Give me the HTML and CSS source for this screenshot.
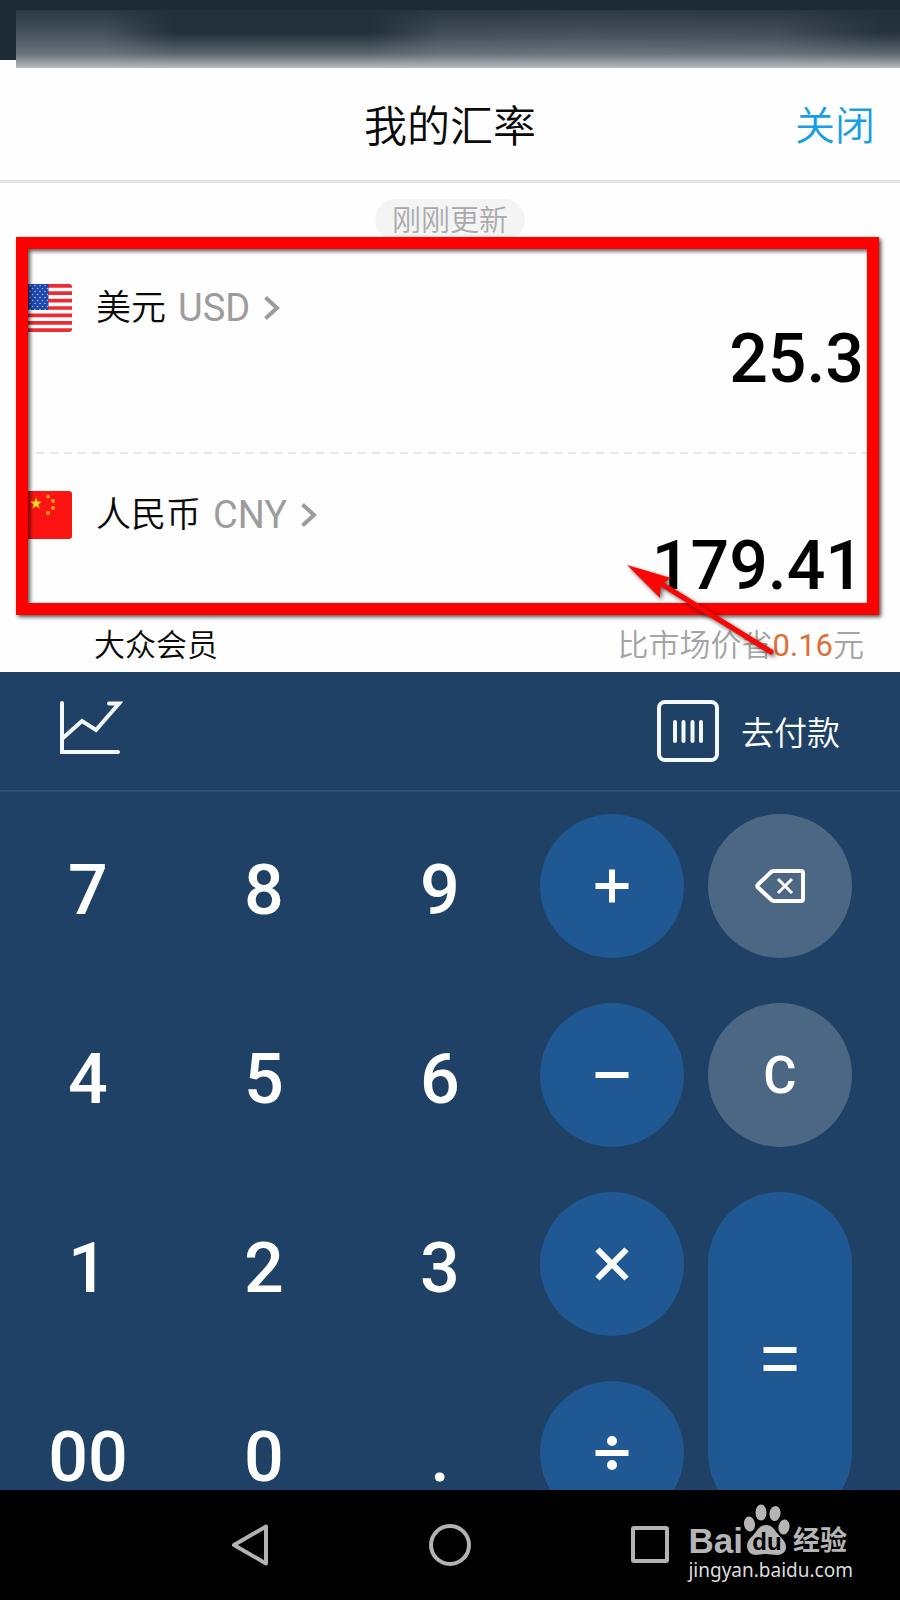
FILE: index.html
```html
<!DOCTYPE html>
<html lang="zh-CN">
<head>
<meta charset="utf-8">
<meta name="viewport" content="width=device-width, initial-scale=1">
<title>我的汇率</title>
<link rel="stylesheet" href="styles.css">
</head>
<body>
<div class="app">
  <div class="status"><div class="status-blur"></div></div>

  <header class="header">
    <h1 class="title">我的汇率</h1>
    <button class="close" type="button">关闭</button>
  </header>

  <main class="rates">
    <div class="updated">刚刚更新</div>

    <section class="rate">
      <button class="currency" type="button">
        <svg class="flag" viewBox="0 0 48 48" aria-hidden="true">
          <defs>
            <clipPath id="round"><rect width="48" height="48" rx="3"/></clipPath>
            <pattern id="stars" width="5" height="6" patternUnits="userSpaceOnUse">
              <circle cx="1" cy="1.5" r=".8" fill="#a9c0f0"/><circle cx="3.5" cy="4.5" r=".8" fill="#a9c0f0"/>
            </pattern>
          </defs>
          <g clip-path="url(#round)">
            <rect width="48" height="48" fill="#fff"/>
            <path d="M0 1.8h48M0 9.2h48M0 16.6h48M0 24h48M0 31.4h48M0 38.8h48M0 46.2h48" stroke="#ee2b35" stroke-width="3.7"/>
            <rect width="24.500" height="26" fill="#1d47ab"/>
            <rect width="24.500" height="26" fill="url(#stars)"/>
          </g>
        </svg>
        <span class="name">美元</span>
        <span class="code">USD</span>
        <svg class="chevron" viewBox="0 0 16 24" aria-hidden="true"><path d="M1.500 1.500 13 12 1.500 22.500"/></svg>
      </button>
      <output class="amount">25.3</output>
    </section>

    <svg class="divider" aria-hidden="true"><line x1="0" y1="1" x2="100%" y2="1"/></svg>

    <section class="rate">
      <button class="currency" type="button">
        <svg class="flag" viewBox="0 0 48 48" aria-hidden="true">
          <rect width="48" height="48" rx="3" fill="#fd1412"/>
          <g fill="#ffdc13">
            <path d="m12 6 1.500 4.400 4.600.1-3.700 2.800 1.300 4.500-3.700-2.700-3.700 2.700 1.300-4.500-3.700-2.800 4.600-.1z"/>
            <g fill="#fba21a"><circle cx="24" cy="5.500" r="2"/><circle cx="29" cy="10" r="2"/><circle cx="29" cy="17" r="2"/><circle cx="24" cy="22" r="2"/></g>
          </g>
        </svg>
        <span class="name">人民币</span>
        <span class="code">CNY</span>
        <svg class="chevron" viewBox="0 0 16 24" aria-hidden="true"><path d="M1.500 1.500 13 12 1.500 22.500"/></svg>
      </button>
      <output class="amount">179.41</output>
    </section>

    <div class="member">
      <span>大众会员</span>
      <span class="saving">比市场价省<b class="saved">0.16</b>元</span>
    </div>

    <div class="mark-box"></div>
    <svg class="mark-arrow" viewBox="0 0 154 96" aria-hidden="true">
      <path d="M3 2 47 15 40 19.500 149 87q2 3-2 5L36.500 23.500 36 35z"/>
    </svg>
  </main>

  <div class="toolbar">
    <button class="tool" type="button" aria-label="走势">
      <svg class="chart" viewBox="1 1 64 62" aria-hidden="true"><path d="M4 4v49h56M5 39 24 22l14 9L61 4.500H51"/></svg>
    </button>
    <button class="tool" type="button">
      <svg class="barcode" viewBox="0 0 62 62" aria-hidden="true"><rect x="2" y="2" width="58" height="58" rx="6"/><path d="M18 22v19M26.500 22v19M35.500 22v19M44 22v19"/></svg>
      <span>去付款</span>
    </button>
  </div>

  <div class="keypad">
    <button class="digit" type="button">7</button>
    <button class="digit" type="button">8</button>
    <button class="digit" type="button">9</button>
    <button class="op" type="button" aria-label="加"><svg class="sign" viewBox="0 0 50 50"><path d="M8.500 25h33M25 8.500v33"/></svg></button>
    <button class="op soft" type="button" aria-label="退格"><svg class="sign" viewBox="0 0 50 50"><path class="erase" d="M48 12q0-2-2-2H19q-1.500 0-3 1L3 23.500q-1.500 1.500 0 3L16 38.500q1.500 1.500 3 1.500h27q2 0 2-2z"/><path class="cross" d="m23 18 14 14M37 18 23 32"/></svg></button>

    <button class="digit" type="button">4</button>
    <button class="digit" type="button">5</button>
    <button class="digit" type="button">6</button>
    <button class="op" type="button" aria-label="减"><svg class="sign" viewBox="0 0 50 50"><path d="M8.500 25h33"/></svg></button>
    <button class="op soft" type="button">C</button>

    <button class="digit" type="button">1</button>
    <button class="digit" type="button">2</button>
    <button class="digit" type="button">3</button>
    <button class="op" type="button" aria-label="乘"><svg class="sign" viewBox="0 0 50 50"><path d="m10.500 10.500 29 29M39.500 10.500l-29 29"/></svg></button>
    <button class="op equals" type="button" aria-label="等于"><svg class="sign" viewBox="0 0 50 50"><path d="M8.500 16h33M8.500 34h33"/></svg></button>

    <button class="digit" type="button">00</button>
    <button class="digit" type="button">0</button>
    <button class="digit" type="button">.</button>
    <button class="op" type="button" aria-label="除"><svg class="sign" viewBox="0 0 50 50"><path d="M8.500 25h33"/><circle cx="25" cy="13" r="5"/><circle cx="25" cy="37" r="5"/></svg></button>
  </div>

  <nav class="nav">
    <button class="nav-key" type="button" aria-label="返回"><svg viewBox="0 0 44 44"><path d="M38 3.500v37L6 22z"/></svg></button>
    <button class="nav-key" type="button" aria-label="主页"><svg viewBox="0 0 44 44"><circle cx="22" cy="22" r="19"/></svg></button>
    <button class="nav-key" type="button" aria-label="最近"><svg viewBox="0 0 44 44"><rect x="5" y="5" width="34" height="33" rx="1"/></svg></button>
    <div class="credit">
      <div class="brand">
        <span class="brand-latin">Bai</span>
        <span class="paw">
          <svg viewBox="0 0 48 52" aria-hidden="true">
            <ellipse cx="6.500" cy="20" rx="5.500" ry="7.500" transform="rotate(-8 6.500 20)"/>
            <ellipse cx="18" cy="8.500" rx="5.500" ry="8"/>
            <ellipse cx="32" cy="9.500" rx="5.500" ry="7.500" transform="rotate(10 32 9.500)"/>
            <ellipse cx="41" cy="23" rx="5.500" ry="7.500" transform="rotate(10 41 23)"/>
            <path d="M23 21c6 0 8 4 11 8 4 5 9 8 9 14 0 5-4 8-9 8-4 0-7-1-11-1s-6 1-10 1c-5 0-9-4-9-9 0-6 5-9 8-13s5-8 11-8z"/>
          </svg>
          <span class="paw-text">du</span>
        </span>
        <span class="brand-cn">经验</span>
      </div>
      <div class="site">jingyan.baidu.com</div>
    </div>
  </nav>
</div>
</body>
</html>
```

FILE: styles.css
```css
* { box-sizing: border-box; }

body {
  margin: 0;
  background: #000;
  color: #0a0a0a;
  font-family: Roboto, "Noto Sans CJK SC", sans-serif;
}

button {
  padding: 0;
  border: 0;
  background: none;
  color: inherit;
  font: inherit;
}

svg { display: block; }

.app {
  display: flex;
  flex-direction: column;
  height: 100vh;
  overflow: hidden;
  background: #fefefe;
}

/* Status bar */
.status {
  position: relative;
  flex: none;
  height: 60px;
  background: #1e2b37;
}

.status-blur {
  position: absolute;
  inset: 10px 0 -8px 16px;
  background:
    linear-gradient(to bottom, rgba(34, 46, 58, .7) 0, rgba(60, 70, 80, 0) 40%, rgba(130, 136, 142, .6) 75%, #b6babe 100%),
    linear-gradient(to right, #46515b 0, #46515b 10%, #232f3b 18%, #232f3b 40%, #414c56 48%, #46505a 64%, #434d57 86%, #26323e 98%);
}

/* Header */
.header {
  display: grid;
  grid-template-columns: 1fr auto 1fr;
  align-items: center;
  flex: none;
  padding: 37px 25px 23px;
  border-bottom: 3px solid #e4e4e4;
  line-height: 60px;
}

.title {
  grid-column: 2;
  margin: 0;
  font-size: 43px;
  font-weight: 350;
}

.close {
  justify-self: end;
  color: #189fe2;
  font-size: 40px;
  font-weight: 350;
}

/* Rates */
.rates {
  position: relative;
  flex: none;
  padding-top: 16px;
}

.updated {
  width: fit-content;
  margin: 0 auto 7px;
  padding: 4px 17px 0;
  border-radius: 21px;
  background: #f4f4f4;
  color: #aaa;
  font-size: 29px;
  font-weight: 350;
  line-height: 37px;
}

.rate {
  display: flex;
  align-items: flex-start;
  justify-content: space-between;
  padding: 33px 36px 0 24px;
}

.currency {
  display: flex;
  align-items: center;
  height: 56px;
}

.flag {
  width: 48px;
  height: 48px;
}

.name {
  margin: 0 12px 0 24px;
  padding-bottom: 8px;
  font-size: 35px;
  font-weight: 350;
}

.code {
  margin-right: 14px;
  color: #9c9c9c;
  font-size: 38px;
}

.chevron {
  width: 16px;
  height: 24px;
  fill: none;
  stroke: #9c9c9c;
  stroke-width: 4;
}

.amount {
  padding-top: 42px;
  color: #000;
  font-size: 68px;
  font-weight: 500;
  line-height: 74px;
}

.divider {
  width: calc(100% - 64px);
  height: 2px;
  margin: 56px 36px 0 36px;
  stroke: #e6e6e6;
  stroke-width: 2;
  stroke-dasharray: 8 6;
}

.member {
  display: flex;
  justify-content: space-between;
  padding: 20px 36px 3px 94px;
  font-size: 31px;
  font-weight: 350;
  line-height: 46px;
}

.saving { color: #a4a4a4; }

.saved {
  color: #dc7138;
  font-weight: 400;
}

.mark-box {
  position: absolute;
  inset: 54px 21px 57px 16px;
  border: 12px solid #fe0000;
  box-shadow: 2px 2px 4px rgba(0, 0, 0, .7), inset 2px 2px 4px rgba(0, 0, 0, .7);
}

.mark-arrow {
  position: absolute;
  right: 122px;
  bottom: 13px;
  width: 154px;
  height: 96px;
  fill: #fb0505;
  filter: drop-shadow(2px 2px 2px rgba(0, 0, 0, .6));
}

/* Toolbar */
.toolbar {
  display: flex;
  align-items: center;
  justify-content: space-between;
  flex: none;
  padding: 28px 60px 28px 59px;
  border-bottom: 2px solid #36506f;
  background: #1f4165;
  color: #fff;
  font-size: 33px;
  font-weight: 350;
}

.tool {
  display: flex;
  align-items: center;
  gap: 22px;
}

.chart,
.barcode {
  fill: none;
  stroke: #f4f8fc;
  stroke-width: 4;
  stroke-linecap: round;
}

.chart {
  width: 64px;
  height: 62px;
}

.barcode {
  width: 62px;
  height: 62px;
}

/* Keypad */
.keypad {
  display: grid;
  grid-template-columns: repeat(3, 1fr) 156px 168px;
  grid-auto-rows: 144px;
  row-gap: 45px;
  flex: 1;
  min-height: 0;
  padding: 22px 48px 0 0;
  overflow: hidden;
  background: #1f4165;
  color: #fff;
}

.digit {
  padding-top: 8px;
  font-size: 70px;
  font-weight: 500;
  line-height: 70px;
}

.op {
  display: flex;
  align-items: center;
  justify-content: center;
  justify-self: end;
  width: 144px;
  border-radius: 72px;
  background: #1f5892;
  font-size: 51px;
  font-weight: 500;
}

.soft { background: #4c6784; }

.equals { grid-row: 3 / span 2; grid-column: 5; }

.sign {
  width: 50px;
  height: 50px;
  fill: #fff;
  stroke: #fff;
  stroke-width: 6;
}

.sign path { fill: none; }
.sign circle { stroke: none; }
.sign .erase { stroke-width: 4; }
.sign .cross { stroke-width: 3; }

/* System navigation */
.nav {
  position: relative;
  display: flex;
  align-items: center;
  justify-content: center;
  gap: 156px;
  flex: none;
  height: 110px;
  background: #000;
}

.nav-key svg {
  width: 44px;
  height: 44px;
  fill: none;
  stroke: #b2b2b2;
  stroke-width: 4;
  stroke-linejoin: round;
}

.credit {
  position: absolute;
  right: 47px;
  bottom: 16px;
  color: #b5b5b5;
}

.brand {
  display: flex;
  align-items: flex-end;
}

.brand-latin {
  font: 700 35px/30px "Liberation Sans", sans-serif;
}

.paw {
  position: relative;
  margin-right: 2px;
}

.paw svg {
  width: 48px;
  height: 52px;
  fill: #b5b5b5;
}

.paw-text {
  position: absolute;
  inset: auto 0 0 0;
  color: #000;
  font: 700 24px/28px "Liberation Sans", sans-serif;
  text-align: center;
}

.brand-cn {
  font-size: 27px;
  font-weight: 700;
  line-height: 30px;
}

.site {
  color: #ddd;
  font: 400 19px/28px "Noto Sans", sans-serif;
}
```
